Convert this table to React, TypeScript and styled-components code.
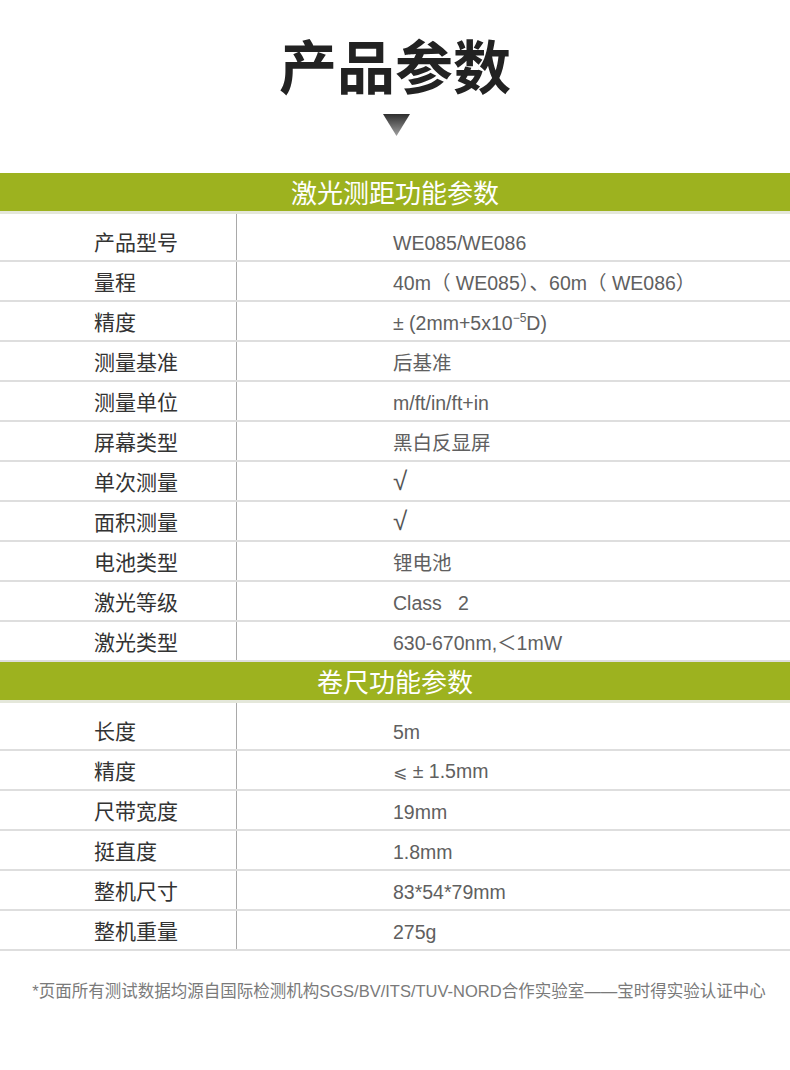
import React from "react";
import styled, { createGlobalStyle } from "styled-components";

interface SpecRow {
  label: string;
  value: React.ReactNode;
}

interface SpecSection {
  title: string;
  rows: SpecRow[];
}

const Sup = styled.sup`
  font-size: 12px;
  line-height: 0;
  vertical-align: 8px;
`;

const Check = styled.span`
  font-family: "Liberation Sans", sans-serif;
  font-size: 26px;
  line-height: 0;
  color: #555555;
`;

const MathGlyph = styled.span`
  font-family: "DejaVu Sans", sans-serif;
  font-size: 17px;
`;

const sections: SpecSection[] = [
  {
    title: "激光测距功能参数",
    rows: [
      { label: "产品型号", value: "WE085/WE086" },
      { label: "量程", value: "40m（ WE085）、60m（ WE086）" },
      {
        label: "精度",
        value: (
          <>
            ± (2mm+5x10<Sup>−5</Sup>D)
          </>
        ),
      },
      { label: "测量基准", value: "后基准" },
      { label: "测量单位", value: "m/ft/in/ft+in" },
      { label: "屏幕类型", value: "黑白反显屏" },
      { label: "单次测量", value: <Check>√</Check> },
      { label: "面积测量", value: <Check>√</Check> },
      { label: "电池类型", value: "锂电池" },
      { label: "激光等级", value: "Class   2" },
      { label: "激光类型", value: "630-670nm,＜1mW" },
    ],
  },
  {
    title: "卷尺功能参数",
    rows: [
      { label: "长度", value: "5m" },
      {
        label: "精度",
        value: (
          <>
            <MathGlyph>⩽</MathGlyph> ± 1.5mm
          </>
        ),
      },
      { label: "尺带宽度", value: "19mm" },
      { label: "挺直度", value: "1.8mm" },
      { label: "整机尺寸", value: "83*54*79mm" },
      { label: "整机重量", value: "275g" },
    ],
  },
];

export default function App() {
  return (
    <>
      <GlobalStyle />
      <Page>
        <Title>产品参数</Title>
        <Arrow width="27" height="22" viewBox="0 0 27 22">
          <defs>
            <linearGradient id="arrowFill" x1="0" y1="0" x2="0" y2="1">
              <stop offset="0" stopColor="#2e2e2e" />
              <stop offset="1" stopColor="#a0a0a0" />
            </linearGradient>
          </defs>
          <polygon points="0,0 27,0 13.5,22" fill="url(#arrowFill)" />
        </Arrow>

        {sections.map((section, i) => (
          <Section key={section.title} $first={i === 0}>
            <SectionBar>{section.title}</SectionBar>
            {section.rows.map((row, j) => (
              <Row key={row.label} $first={j === 0}>
                <Label>{row.label}</Label>
                <Value>
                  <span>{row.value}</span>
                </Value>
              </Row>
            ))}
          </Section>
        ))}

        <Note>
          *页面所有测试数据均源自国际检测机构SGS/BV/ITS/TUV-NORD合作实验室——宝时得实验认证中心
        </Note>
      </Page>
    </>
  );
}

const GlobalStyle = createGlobalStyle`
  html, body {
    margin: 0;
    padding: 0;
    background: #ffffff;
  }
  body {
    font-family: "Noto Sans CJK SC", "Noto Sans", sans-serif;
  }
`;

const Page = styled.div`
  width: 790px;
  height: 1070px;
  display: flex;
  flex-direction: column;
  align-items: center;
  padding-top: 35px;
  box-sizing: border-box;
  overflow: hidden;
`;

const Title = styled.h1`
  margin: 0;
  font-family: "Noto Sans CJK SC", sans-serif;
  font-weight: 700;
  font-size: 58px;
  line-height: 58px;
  color: #222222;
  letter-spacing: 0;
`;

const Arrow = styled.svg`
  display: block;
  margin-top: 21px;
  margin-left: 2px;
`;

const Section = styled.section<{ $first: boolean }>`
  width: 100%;
  margin-top: ${(p) => (p.$first ? "37px" : "0")};
`;

const SectionBar = styled.div`
  height: 38px;
  background: #9db21f;
  border-bottom: 3px solid #e4e7da;
  color: #ffffff;
  font-family: "Noto Sans CJK SC", sans-serif;
  font-size: 26px;
  line-height: 38px;
  text-align: center;
`;

const Row = styled.div<{ $first: boolean }>`
  display: grid;
  grid-template-columns: 237px 1fr;
  height: ${(p) => (p.$first ? "48px" : "40px")};
  box-sizing: border-box;
  border-bottom: 2px solid #dedede;
`;

const Label = styled.div`
  display: flex;
  align-items: flex-end;
  height: 100%;
  padding: 0 0 0 94px;
  box-sizing: border-box;
  border-right: 1px solid #a9a9a9;
  font-family: "Noto Sans CJK SC", sans-serif;
  font-size: 21px;
  line-height: 38px;
  color: #333333;
`;

const Value = styled.div`
  display: flex;
  align-items: flex-end;
  padding-left: 156px;
  font-family: "Liberation Sans", "Noto Sans CJK SC", sans-serif;
  font-size: 19.5px;
  line-height: 34px;
  color: #606060;
  white-space: pre;
`;

const Note = styled.p`
  margin: 29px 0 0;
  padding-left: 8px;
  font-family: "Liberation Sans", "Noto Sans CJK SC", sans-serif;
  font-size: 16.5px;
  line-height: 22px;
  color: #7a7a7a;
  white-space: nowrap;
  text-align: center;
`;
